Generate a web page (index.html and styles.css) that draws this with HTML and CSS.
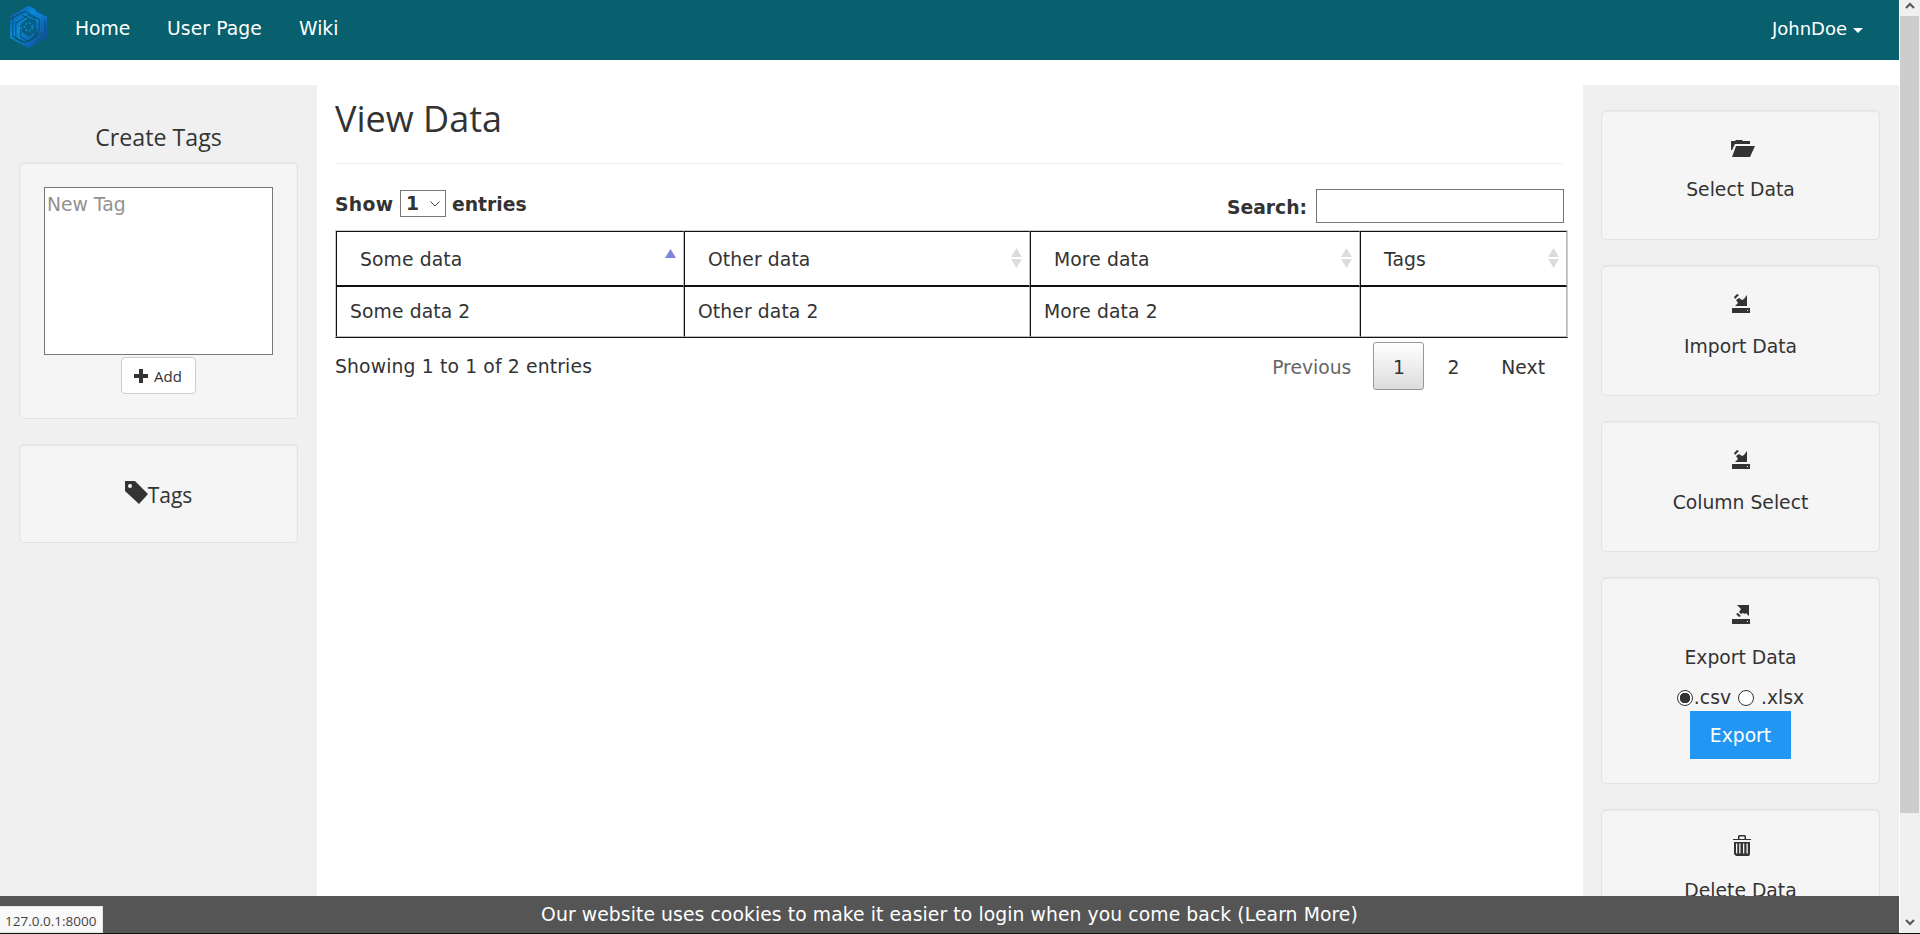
FILE: index.html
```
<!DOCTYPE html>
<html lang="en">
<head>
<meta charset="utf-8">
<title>View Data</title>
<link rel="stylesheet" href="styles.css">
</head>
<body>
<svg class="defs" width="0" height="0" aria-hidden="true">
  <symbol id="import" viewBox="0 0 18 19"><path d="M0 14h18v5H0zM3 12l3-3-2-3 3-2 3 2 2-1 3-4v11z"/><path d="M2 3l3-3 2 1-4 4z"/><path fill="#f5f5f5" d="M15 16h1v1h-1z"/></symbol>
  <symbol id="export" viewBox="0 0 18 19"><path d="M0 14h18v5H0zM5 0h12v11l-3-3-1 1-2-1-2 1-2-2 2-3z"/><path d="M4 9l2-1 3 3-2 1z"/><path fill="#f5f5f5" d="M15 16h1v1h-1z"/></symbol>
  <symbol id="sort" viewBox="0 0 11 20"><path d="M5.500 0L11 9H0zM0 11h11l-5.500 9z"/></symbol>
</svg>
<div class="window">
  <div class="page">
    <nav class="navbar">
      <svg class="logo" viewBox="0 0 38 44">
        <defs><linearGradient id="g" x1="0" y1="0" x2="1" y2="1"><stop offset="0" stop-color="#174d9b"/><stop offset=".4" stop-color="#078bdc"/><stop offset="1" stop-color="#17418a"/></linearGradient></defs>
        <path fill="url(#g)" d="M19 0l19 11v22L19 44 0 33V11z"/>
        <path fill="none" stroke="#07566f" stroke-width="1.100" d="M0 14l15-8 15 8v12l-7 8M3 12v20l10 6M2 31l13 7 18-10M6 35V18l13-8 8 4M12 10l14 6v18M10 22l8-8M11 24v8l8 5M36 15v15l-10 7M27 23v9l-8 5M37 10L26 5"/>
        <path fill="#075f83" d="M19 13l8 5v9l-8 5-7-5v-9z"/>
        <circle cx="19" cy="22" r="4" fill="none" stroke="#0b83ba" stroke-width="2" stroke-dasharray="2.200 1.500"/>
      </svg>
      <a class="nav-link home">Home</a><a class="nav-link user">User Page</a><a class="nav-link wiki">Wiki</a>
      <span class="account">JohnDoe</span><span class="caret"></span>
    </nav>
    <div class="columns">
      <aside class="side left">
        <h4 class="side-title">Create Tags</h4>
        <div class="well create">
          <textarea class="tag-input" placeholder="New Tag"></textarea>
          <button class="add"><svg width="14" height="14" viewBox="0 0 14 14"><path d="M5 0h4v5h5v4H9v5H5V9H0V5h5z"/></svg><span class="add-text">Add</span></button>
        </div>
        <div class="well tags"><svg class="tag-icon" viewBox="0 0 23 23"><path fill-rule="evenodd" d="M0 0h10l13 13-9 10L0 10zM5 3a2 2 0 1 0 0 4 2 2 0 0 0 0-4z"/></svg><span class="tags-text">Tags</span></div>
      </aside>
      <main class="main">
        <h1 class="title"><span>View Data</span></h1>
        <div class="controls">
          <div class="length"><b class="show">Show</b><span class="select"><b>1</b><svg width="10" height="6" viewBox="0 0 10 6"><path d="M.5.5L5 5 9.500.5" fill="none" stroke="#444"/></svg></span><b class="entries">entries</b></div>
          <div class="search"><b class="search-label">Search:</b><input class="search-input"></div>
        </div>
        <div class="table">
          <div class="th">Some data<svg class="asc" viewBox="0 0 11 9"><path d="M5.500 0L11 9H0z"/></svg></div>
          <div class="th">Other data<svg class="sort"><use href="#sort"/></svg></div>
          <div class="th">More data<svg class="sort"><use href="#sort"/></svg></div>
          <div class="th">Tags<svg class="sort"><use href="#sort"/></svg></div>
          <div class="td">Some data 2</div><div class="td">Other data 2</div><div class="td">More data 2</div><div class="td"></div>
        </div>
        <div class="table-foot">
          <span class="info">Showing 1 to 1 of 2 entries</span>
          <span class="previous">Previous</span><span class="current">1</span><span class="two">2</span><span class="next">Next</span>
        </div>
      </main>
      <aside class="side right">
        <div class="well card"><svg class="folder" viewBox="0 0 24 17"><path d="M0 1h4l1-1h6l1 1h7v3H4L1 10H0zM5 6h19l-5 11H1z"/></svg><span class="label">Select Data</span></div>
        <div class="well card"><svg class="drive"><use href="#import"/></svg><span class="label">Import Data</span></div>
        <div class="well card"><svg class="drive"><use href="#import"/></svg><span class="label">Column Select</span></div>
        <div class="well card export">
          <svg class="drive"><use href="#export"/></svg><span class="label">Export Data</span>
          <div class="formats"><i class="radio on"></i><span>.csv</span><i class="radio off"></i><span>.xlsx</span></div>
          <button class="export-button">Export</button>
        </div>
        <div class="well card delete"><svg class="trash" viewBox="0 0 18 21"><path fill-rule="evenodd" d="M5 4V1l1-1h6l1 1v3h-1.500V1.500h-5V4zM0 4h18v1H0zM1 7h16v12l-1 2H3l-2-2zM3 8.500v10h1.300v-10zM6.200 8.500v10h1.300v-10zM10 8.500v10h1.300v-10zM13.500 8.500v10h1.300v-10z"/></svg><span class="label">Delete Data</span></div>
      </aside>
    </div>
    <footer class="cookies"><span>Our website uses cookies to make it easier to login when you come back (Learn More)</span></footer>
  </div>
  <div class="scrollbar">
    <svg class="arrow" viewBox="0 0 10 7"><path d="M1 6l4-4 4 4"/></svg>
    <div class="thumb"></div>
    <svg class="arrow down" viewBox="0 0 10 7"><path d="M1 1l4 4 4-4"/></svg>
  </div>
</div>
<div class="edge"></div>
<div class="status">127.0.0.1:8000</div>
</body>
</html>
```
FILE: styles.css
```
* { box-sizing: border-box; }
body { margin: 0; height: 934px; overflow: hidden; background: #fff; color: #333; font: 18.75px/27px Verdana, "DejaVu Sans", sans-serif; }
svg { display: block; fill: #333; flex: none; }
span, b, a { white-space: nowrap; }
.defs { position: absolute; }
.window { display: flex; height: 933px; }
.page { display: flex; flex-direction: column; width: 1899px; height: 933px; }
.navbar { display: flex; height: 60px; flex: none; background: #085f6e; color: #fff; padding-left: 10px; }
.logo { width: 37px; height: 44px; margin-top: 5px; }
.nav-link { margin-top: 15px; }
.home { margin-left: 28px; width: 92px; }
.user { width: 132px; letter-spacing: .1px; }
.account { margin: 15px 6px 0 auto; font-size: 18px; }
.caret { width: 0; height: 0; border: 5px solid transparent; border-top-color: #fff; border-bottom: 0; margin: 28px 36px 0 0; }
.columns { display: flex; height: 811px; margin-top: 25px; overflow: hidden; }
.side { background: #f0f0f0; height: 1000px; flex: none; }
.left { width: 317px; padding: 36px 19px 0; }
.right { width: 316px; padding: 25px 19px 0 18px; }
.side-title { margin: 0; height: 41px; font: 400 23.2px/32px "Open Sans", sans-serif; text-align: center; }
.well { width: 279px; background: #f5f5f5; border: 1px solid #e3e3e3; border-radius: 5px; box-shadow: inset 0 1px 2px rgba(0,0,0,.06); margin-bottom: 25px; display: flex; flex-direction: column; align-items: center; }
.create { height: 257px; padding-top: 24px; }
.tag-input { width: 229px; height: 168px; resize: none; border: 1px solid #777; padding: 3px 2px 2px; background: #fff; font: inherit; margin: 0; overflow: hidden; }
.tag-input::placeholder { color: #929292; opacity: 1; }
.add { margin-top: 2px; width: 75px; height: 37px; border: 1px solid #ccc; border-radius: 4px; background: #fff; display: flex; align-items: center; gap: 6px; padding: 0 12px; color: #333; font: 15px/24px "Open Sans", sans-serif; }
.tags { height: 99px; flex-direction: row; justify-content: center; align-items: flex-start; padding-top: 34px; }
.tag-icon { width: 23px; height: 23px; margin-top: 2px; }
.tags-text { font: 21px/32px "Open Sans", sans-serif; }
.main { width: 1266px; flex: none; padding: 0 15px 0 18px; }
.title { margin: 0; height: 79px; width: 1228px; border-bottom: 1px solid #eee; font: 400 36px/68px "Open Sans", sans-serif; }
.controls { display: flex; justify-content: space-between; width: 1229px; height: 66px; padding-top: 25px; }
.length { display: flex; padding-top: 1px; }
.show { width: 65px; padding-top: 1px; letter-spacing: .3px; }
.select { display: flex; justify-content: space-between; align-items: center; width: 46px; height: 27px; border: 1px solid #777; padding: 0 5px; margin-right: 6px; }
.entries { padding-top: 1px; }
.search { display: flex; }
.search-label { padding: 5px 9px 0 0; }
.search-input { width: 248px; height: 34px; border: 1px solid #777; padding: 0; background: #fff; }
.table { display: grid; width: 1233px; grid-template-columns: 348px 346px 330px 207px; grid-template-rows: 56px 50px; border: 1px solid #ccc; border-bottom: 1px solid #111; }
.th, .td { border-left: 1px solid #111; border-right: 1px solid #bbb; }
.th { display: flex; justify-content: space-between; border-top: 1px solid #111; border-bottom: 2px solid #111; padding: 14px 7px 0 23px; letter-spacing: .1px; }
.td { border-bottom: 1px solid #bbb; padding: 11px 13px; letter-spacing: .1px; }
.sort { width: 11px; height: 20px; fill: #dcdcdc; margin-top: 2px; }
.asc { width: 11px; height: 9px; fill: #7d82dd; margin-top: 3px; }
.table-foot { display: flex; width: 1229px; padding-top: 4px; }
.info { margin: 11px auto 0 0; letter-spacing: .15px; }
.previous { color: #666; margin: 12px 22px 0 0; }
.current { width: 51px; height: 48px; border: 1px solid #979797; border-radius: 3px; background: linear-gradient(#fff, #dcdcdc); text-align: center; padding-top: 11px; }
.two { margin: 12px 42px 0 23px; }
.next { margin: 12px 19px 0 0; }
.card { height: 131px; padding-top: 28px; }
.card:first-child { height: 130px; }
.folder { width: 24px; height: 17px; margin: 1px 0 15px 4px; }
.drive { width: 18px; height: 19px; margin-bottom: 16px; }
.trash { width: 18px; height: 21px; margin: -3px 0 17px 3px; }
.label { padding-top: 4px; }
.export { height: 207px; padding-top: 27px; }
.delete { height: 180px; }
.formats { display: flex; align-items: center; margin-top: 13px; height: 27px; }
.radio { width: 16px; height: 16px; border: 1px solid #333; border-radius: 50%; background: #fff; margin-right: 1px; }
.on { background: radial-gradient(circle, #333 0 5px, #fff 5.500px); }
.off { margin: 0 7px 0 7px; }
.export-button { width: 101px; height: 48px; background: #2196f3; border: 0; color: #fff; font: inherit; padding: 0; }
.cookies { height: 37px; background: #555; color: #fff; text-align: center; padding: 5px 0 0; letter-spacing: .09px; }
.scrollbar { width: 21px; height: 933px; display: flex; flex-direction: column; background: #f0f0f0; border-left: 1px solid #fff; }
.arrow { width: 10px; height: 7px; margin: 2px 0 7px 5px; fill: none; stroke: #555; stroke-width: 2; }
.thumb { width: 19px; height: 797px; background: #cdcdcd; }
.down { margin-top: 106px; }
.edge { height: 1px; background: #111; }
.status { position: absolute; left: 0; top: 906px; width: 103px; height: 27px; border: 1px solid #e3e3e3; border-left: 0; background: #f9f9f9; color: #444; font: 13.500px/29px "Open Sans", sans-serif; padding-left: 5px; }
```
